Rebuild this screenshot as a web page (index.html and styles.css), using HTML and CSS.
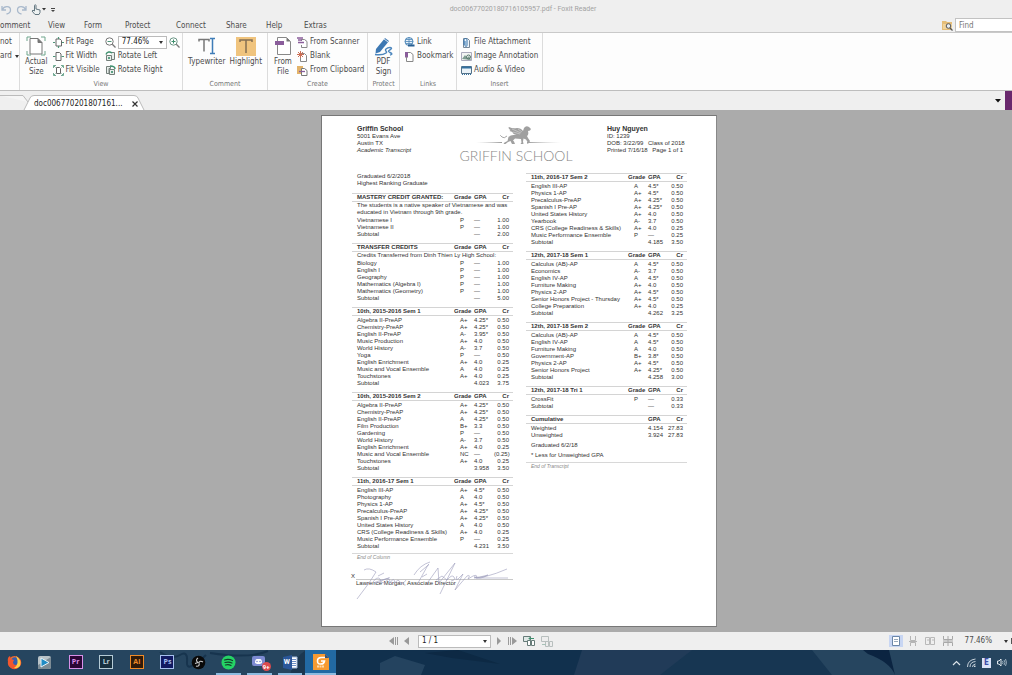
FILE: index.html
```html
<!DOCTYPE html>
<html lang="en">
<head>
<meta charset="utf-8">
<title>doc00677020180716105957.pdf - Foxit Reader</title>
<link rel="stylesheet" href="styles.css">
<script src="transcript.js" defer></script>
</head>
<body>
<div class="app">
  <header class="titlebar">
    <div class="quick">
      <button aria-label="Undo"><svg width="11" height="11" viewBox="0 0 11 11"><path d="M1 2v4h4M1.500 5.500C3 1.500 9.500 1.500 9.500 6c0 2-1.500 3.500-4 4" fill="none" stroke="#a9b9cc" stroke-width="1.300"/></svg></button>
      <button aria-label="Redo"><svg width="11" height="11" viewBox="0 0 11 11"><path d="M10 2v4H6M9.500 5.500C8 1.500 1.500 1.500 1.500 6c0 2 1.500 3.500 4 4" fill="none" stroke="#a9b9cc" stroke-width="1.300"/></svg></button>
      <button aria-label="Hand tool"><svg width="15" height="11" viewBox="0 0 15 11"><path d="M3.500 7V1.500c0-1 1.500-1 1.500 0V5l4 1v2.500L8 10.500H4L1 7l1-.8z" fill="#eef2f2" stroke="#647780" stroke-width="1"/><path d="M11 4h4l-2 2.500z" fill="#333"/></svg></button>
      <button aria-label="Customize"><svg width="6" height="11" viewBox="0 0 6 11"><path d="M1 4h4v1H1zM1 6h4L3 8z" fill="#444"/></svg></button>
    </div>
    <h1>doc00677020180716105957.pdf - Foxit Reader</h1>
  </header>

  <div class="menubar">
    <nav class="menu">
      <button aria-label="Comment">omment</button><button>View</button><button>Form</button><button>Protect</button><button>Connect</button><button>Share</button><button>Help</button><button>Extras</button>
    </nav>
    <label class="find">
      <svg width="11" height="11" viewBox="0 0 11 11"><path d="M0 1h4l1 1h5v8H0z" fill="#e5bd77"/><path d="M1 4h9v5H1z" fill="#f0d39b"/><circle cx="6.500" cy="6" r="2.300" fill="#e9eef2" stroke="#555" /><path d="M8 8l2.500 2.500" stroke="#555" stroke-width="1.300"/></svg>
      <input type="text" placeholder="Find" aria-label="Find">
    </label>
  </div>

  <div class="ribbon">
    <section class="group cut">
      <div class="stack"><button aria-label="SnapShot">not</button><button aria-label="Clipboard">ard <i class="caret"></i></button></div>
    </section>
    <section class="group view">
      <div class="tools">
        <button class="big"><svg width="20" height="20" viewBox="0 0 20 20"><path d="M4 2.500h8l4 4V18H4z" fill="#fff" stroke="#777"/><path d="M12 2.500v4h4" fill="#777" stroke="#777"/><path d="M1 5V1h4M15 1h4v4M1 15v4h4M19 15v4h-4" fill="none" stroke="#6fa58c"/></svg><span>Actual<br>Size</span></button>
        <div class="stack">
          <button><svg width="11" height="11" viewBox="0 0 11 11"><path d="M3 2h4l1.500 1.500V9H3z" fill="#fff" stroke="#666"/><path d="M0 5.500h2M9 5.500h2M5.500 0v2M5.500 9v2" stroke="#4f9478" stroke-width="1.200"/></svg>Fit Page</button>
          <button><svg width="11" height="11" viewBox="0 0 11 11"><path d="M3 1.500h3.500l1.500 1.500v6.500H3z" fill="#fff" stroke="#666"/><path d="M0 5.500h2.500M8.500 5.500H11" stroke="#4f9478" stroke-width="1.200"/></svg>Fit Width</button>
          <button><svg width="11" height="11" viewBox="0 0 11 11"><path d="M3.500 2.500h3l1 1v5h-4z" fill="#fff" stroke="#666"/><path d="M1 1l1.500 1.500M10 1L8.500 2.500M1 10l1.500-1.500M10 10L8.500 8.500M.5 3V.5H3M8 .5h2.500V3M.5 8v2.500H3M8 10.500h2.500V8" fill="none" stroke="#4f9478" stroke-width=".8"/></svg>Fit Visible</button>
        </div>
        <div class="stack">
          <div class="zoomrow">
            <button aria-label="Zoom out"><svg width="11" height="11" viewBox="0 0 11 11"><circle cx="4.500" cy="4.500" r="3.700" fill="#fff" stroke="#777"/><path d="M7.300 7.300L10.500 10.500" stroke="#777" stroke-width="1.300"/><path d="M2.500 4.500h4" stroke="#4f9478"/></svg></button>
            <span class="combo zoom"><select aria-label="Zoom level"><option>77.46%</option></select><i class="caret"></i></span>
            <button aria-label="Zoom in"><svg width="11" height="11" viewBox="0 0 11 11"><circle cx="4.500" cy="4.500" r="3.700" fill="#fff" stroke="#6a9585"/><path d="M7.300 7.300L10.500 10.500" stroke="#777" stroke-width="1.300"/><path d="M2.500 4.500h4M4.500 2.500v4" stroke="#3e8f6d"/></svg></button>
          </div>
          <button><svg width="11" height="11" viewBox="0 0 11 11"><path d="M1.500 4.500h5v5h-5zM5.500 1.500h4v7h-3" fill="#e8eeeb" stroke="#747f7a"/><path d="M1 3.500C2 .5 5 .5 7 2" fill="none" stroke="#3e8f6d" stroke-width="1.400"/><path d="M3 6h2v2H3z" fill="#5aa084"/></svg>Rotate Left</button>
          <button><svg width="11" height="11" viewBox="0 0 11 11"><path d="M4.500 4.500h5v5h-5zM1.500 1.500h4v2H4v5H1.500z" fill="#e8eeeb" stroke="#747f7a"/><path d="M5 1c3 0 5 1 5 3" fill="none" stroke="#3e8f6d" stroke-width="1.400"/><path d="M6 6h2v2H6z" fill="#5aa084"/></svg>Rotate Right</button>
        </div>
      </div>
      <h2>View</h2>
    </section>
    <section class="group comment">
      <div class="tools">
        <button class="big"><svg width="20" height="20" viewBox="0 0 20 20"><path d="M2 5.500V3.500h10v2M7 3.500v12" fill="none" stroke="#777" stroke-width="1.500"/><path d="M13 2.500h5M13 17.500h5M15.500 2.500v15" stroke="#3f7db8" stroke-width="1.500"/></svg><span>Typewriter</span></button>
        <button class="big"><svg width="20" height="20" viewBox="0 0 20 20"><path d="M0 1h20v19H0z" fill="#f0c47e"/><path d="M4 6V4h12v2M10 4v13" fill="none" stroke="#846f53" stroke-width="1.500"/></svg><span>Highlight</span></button>
      </div>
      <h2>Comment</h2>
    </section>
    <section class="group create">
      <div class="tools">
        <button class="big"><svg width="20" height="20" viewBox="0 0 20 20"><path d="M4.500 5V1.500h9l4 4v13h-13V9" fill="#fff" stroke="#888"/><path d="M13.500 1.500v4h4z" fill="#777"/><path d="M2 5h9v4H2z" fill="#8a5d9b"/></svg><span>From<br>File</span></button>
        <div class="stack">
          <button><svg width="11" height="11" viewBox="0 0 11 11"><path d="M4.500 4V2.500h3l2.500 2v6H4.500V8" fill="#fff" stroke="#888"/><path d="M0 1h6M1 3h4M1 5.500h6" stroke="#8a5d9b" stroke-width="1.300"/></svg>From Scanner</button>
          <button><svg width="11" height="11" viewBox="0 0 11 11"><path d="M3.500 2.500h4l2 2v6h-6z" fill="#fff" stroke="#888"/><path d="M3.500 0v7M0 3.500h7M1 1l5 5M6 1L1 6" stroke="#cb6e55"/></svg>Blank</button>
          <button><svg width="11" height="11" viewBox="0 0 11 11"><path d="M0 1h6v8H0z" fill="#e2b36a"/><path d="M4.500 3.500h3l2.500 2v5H4.500z" fill="#fff" stroke="#777"/><path d="M2 6.500h6" stroke="#8a5d9b" stroke-width="1.300"/></svg>From Clipboard</button>
        </div>
      </div>
      <h2>Create</h2>
    </section>
    <section class="group protect">
      <div class="tools">
        <button class="big"><svg width="20" height="20" viewBox="0 0 20 20"><path d="M2 13L11 2l4 3-9 11-4.500 1.500z" fill="#3d78b3"/><path d="M10 3l4 3M12 1l4 3" stroke="#fff" stroke-width=".8"/><path d="M1 18.500c4 .5 9 0 11-1.500s-2-2 0-4 7-2 5 0-4 2-1 3.500 2 2 0 2.500" fill="none" stroke="#4c86bd" stroke-width="1.400"/></svg><span>PDF<br>Sign</span></button>
      </div>
      <h2>Protect</h2>
    </section>
    <section class="group links">
      <div class="tools"><div class="stack">
        <button><svg width="11" height="11" viewBox="0 0 11 11"><circle cx="5" cy="4.500" r="4" fill="#e8f1f8" stroke="#4d87b8"/><path d="M1 4.500h8M5 .5v8M2 2.500h6M2 6.500h6" stroke="#4d87b8" stroke-width=".8"/><path d="M4 8.500h3M7 8.500h3.500" stroke="#275e92" stroke-width="2"/></svg>Link</button>
        <button><svg width="11" height="11" viewBox="0 0 11 11"><path d="M2.500 1.500h4l2.500 2v7H2.500z" fill="#fff" stroke="#888"/><path d="M1 1h3v6L2.500 5.500 1 7z" fill="#8a5d9b"/></svg>Bookmark</button>
      </div></div>
      <h2>Links</h2>
    </section>
    <section class="group insert">
      <div class="tools"><div class="stack">
        <button><svg width="11" height="11" viewBox="0 0 11 11"><path d="M2.500 1.500h4l2 2v7h-6z" fill="#eef4f9" stroke="#789"/><path d="M3 8V3c0-2 3-2 3 0v5c0 2-2 2-2 0V4" fill="none" stroke="#3575ae"/></svg>File Attachment</button>
        <button><svg width="11" height="11" viewBox="0 0 11 11"><path d="M.5 1.500h10v8H.5z" fill="#f2f4f2" stroke="#aab"/><path d="M1 8l3-4 2 3 2-2 2 4z" fill="#7e9c90"/><circle cx="7.500" cy="6" r="2" fill="none" stroke="#55776a"/></svg>Image Annotation</button>
        <button><svg width="11" height="11" viewBox="0 0 11 11"><path d="M.5 1.500h10v7H.5z" fill="#eaf2f8" stroke="#54738b"/><path d="M1 2.500h9" stroke="#35719f" stroke-width="2"/><path d="M1 9.500h9" stroke="#35719f" stroke-dasharray="1 1"/></svg>Audio &amp; Video</button>
      </div></div>
      <h2>Insert</h2>
    </section>
  </div>

  <div class="tabs">
    <svg class="tabshape" width="146" height="19" viewBox="0 0 146 19"><path d="M0 4.500h23L28 11" fill="#f5f5f5" stroke="#bbb"/><path d="M24 19l6-12q1-2.500 4-2.500h100q3 0 4 2.500l6 12" fill="#fff" stroke="#bbb"/></svg>
    <button class="tab">doc006770201807161...</button>
    <button class="close" aria-label="Close tab"><svg width="6" height="6" viewBox="0 0 6 6"><path d="M.5.5l5 5M5.500.5l-5 5" stroke="#333" stroke-width="1.200"/></svg></button>
    <button class="tablist" aria-label="List tabs"><svg width="6" height="4" viewBox="0 0 6 4"><path d="M0 0h6L3 3.500z" fill="#111"/></svg></button>
    <span class="accent"></span>
  </div>

  <main class="work">
    <article class="sheet">
      <header class="letterhead">
        <address><strong>Griffin School</strong><span>5001 Evans Ave</span><span>Austin TX</span><em>Academic Transcript</em></address>
        <div class="logo">
          <svg width="100" height="20" viewBox="0 0 100 20">
            <defs><linearGradient id="l"><stop offset="0" stop-color="#ccc" stop-opacity="0"/><stop offset="1" stop-color="#999"/></linearGradient><linearGradient id="r"><stop offset="0" stop-color="#999"/><stop offset="1" stop-color="#ccc" stop-opacity="0"/></linearGradient></defs>
            <path d="M10 17h26v1H10z" fill="url(#l)"/><path d="M61 17h34v1H61z" fill="url(#r)"/>
            <path d="M43 2q4 2 8 1 4 0 6 3l1-3q2-3 5-1l2 2-1 1.500-2 .5q1 4-1 5l1 2 2 3-1 2-2 1 .5-2-1.500-2.500-2.500-1-.5 3 .5 2.500h-3l1-1.500-.5-3.500-6-.5-2 2 1 1 1 2.500h-3l-1.500-3-2.500 1-2.500 2h-2l1-1.500 3-1.500 1-4q2-2 5-2l3 0q-4-1-4-3l-3-1 1-1q-2-1-2-2.500z" fill="#a0a0a0"/>
            <path d="M46 4l9 4M47 7l7 2M52 4l4 3" stroke="#d6d6d6" stroke-width=".6" fill="none"/><path d="M41 11q-3 3-5 1t-2-2" stroke="#a8a8a8" fill="none"/>
          </svg>
          <span>GRIFFIN SCHOOL</span>
        </div>
        <address><strong>Huy Nguyen</strong><span>ID: 1239</span><span>DOB: 3/22/99&ensp; Class of 2018</span><span>Printed 7/16/18&ensp; Page 1 of 1</span></address>
      </header>
      <div class="columns">
        <div class="column">
          <p class="inset">Graduated 6/2/2018<br>Highest Ranking Graduate</p>
          <div class="terms" id="left"></div>
          <p class="ending">End of Column</p>
          <div class="signature">
            <span class="mark">X</span><span class="line"></span>
            <p>Lawrence Morgan, Associate Director</p>
            <svg class="ink" width="160" height="42" viewBox="0 0 160 42"><path d="M12 12q5-3 12 2L17 25 5 41M26 18l6-3M21 24q4-6 7-3t-4 4 6-3 4-1-1 4q5-8 5 0 4-7 5 0 3-5 5-1t6-2M62 17q6-10 16-13M68 14Q80 4 76 7L66 25M70 19l5-3M76 24L86 10l1 15L103 5 88 36M84 22l6-4 5 4M95 22q5-6 7-3t-3 4M105 18q-2 5 1 3l5-5-8 16 12-14q4-2 1 3l5-3q5-2 3 2l12-3q-8 5-14 2 10 2 33-8M122 20h34" fill="none" stroke="#9a9abb" stroke-width=".6"/></svg>
          </div>
        </div>
        <div class="column">
          <div class="terms" id="right"></div>
          <p class="note">Graduated 6/2/18</p>
          <p class="note">* Less for Unweighted GPA</p>
          <p class="ending">End of Transcript</p>
        </div>
      </div>
    </article>
  </main>

  <footer class="status">
    <div class="pager">
      <button aria-label="First page"><svg width="9" height="8" viewBox="0 0 9 8"><path d="M5 0v8L0 4zM6 0h1v8H6zM8 0h1v8H8z" fill="#9a9a9a"/></svg></button>
      <button aria-label="Previous page"><svg width="6" height="8" viewBox="0 0 6 8"><path d="M5 0v8L0 4z" fill="#999"/></svg></button>
      <span class="combo page"><select aria-label="Page"><option>1 / 1</option></select><i class="caret"></i></span>
      <button aria-label="Next page"><svg width="6" height="8" viewBox="0 0 6 8"><path d="M1 0v8l4-4z" fill="#999"/></svg></button>
      <button aria-label="Last page"><svg width="9" height="8" viewBox="0 0 9 8"><path d="M4 0v8l5-4zM0 0h1v8H0zM2 0h1v8H2z" fill="#9a9a9a"/></svg></button>
      <button aria-label="Previous view"><svg width="12" height="11" viewBox="0 0 12 11"><path d="M.5.500h7v5h-7z" fill="#dfe8e6" stroke="#667b78"/><path d="M4.500 4.500h3v5h-3zM8.500 4.500h3v5h-3z" fill="#fff" stroke="#667b78"/><path d="M11 2.500H6M7.500 1L6 2.500 7.500 4" fill="none" stroke="#3e8f6d"/></svg></button>
      <button aria-label="Next view"><svg width="12" height="11" viewBox="0 0 12 11"><path d="M.5.500h7v5h-7zM4.500 5.500h3v5h-3zM8.500 5.500h3v5h-3z" fill="#eee" stroke="#b8bfbe"/><path d="M1 8.500h4" stroke="#a9c2b8"/></svg></button>
    </div>
    <div class="layouts">
      <button class="on" aria-label="Single page"><svg width="8" height="10" viewBox="0 0 8 10"><path d="M.5.500h7v9h-7z" fill="#fff" stroke="#6b87a8"/><path d="M2 3.500h4M2 5.500h4" stroke="#9ab"/></svg></button>
      <button aria-label="Continuous"><svg width="8" height="10" viewBox="0 0 8 10"><path d="M1.500 0v4.500h5V0M1.500 10V6.500h5V10M0 5.500h8" fill="none" stroke="#b5b5b5"/></svg></button>
      <button aria-label="Facing"><svg width="10" height="10" viewBox="0 0 10 10"><path d="M.5 1.500h4v7h-4zM5.500 1.500h4v7h-4zM2 4h2M7 4h2" fill="none" stroke="#b9b9b9"/></svg></button>
      <button aria-label="Continuous facing"><svg width="10" height="10" viewBox="0 0 10 10"><path d="M.5 0v3.500H9.500V0M.5 10V6.500h9V10M5 0v10M0 5h10" fill="none" stroke="#a8a8a8"/></svg></button>
    </div>
    <button class="percent">77.46%</button><i class="caret"></i><i class="slider"></i>
  </footer>

  <footer class="taskbar">
    <svg class="wallpaper" width="1012" height="25" viewBox="0 0 1012 25" preserveAspectRatio="none">
      <path d="M0 0h1012v25H0z" fill="#26455f"/><path d="M336 0h276l-10 25H336z" fill="#11304d"/><path d="M160 2q12 8 20 3t7 7 19-7M210 3q40 6 58-2" fill="none" stroke="#17344e" stroke-width="2"/><path d="M290 25q4-18 16-25h30v25z" fill="#1b3750"/>
      <path d="M380 13l15-7 30 9-4 10h-41z" fill="#24435f"/><path d="M425 3l33-3 42 14-48-6z" fill="#0d2944"/><path d="M582 0h110l-25 25h-93z" fill="#213b58"/><path d="M692 0h120l20 25H660z" fill="#173652"/><path d="M863 0h26l6 25q-5-13-27-21z" fill="#0b2441"/>
    </svg>
    <nav class="apps">
      <a href="#" aria-label="Firefox"><svg width="15" height="15" viewBox="0 0 15 15"><circle cx="7.500" cy="7.500" r="6.500" fill="#ef6b2e"/><circle cx="8" cy="6.500" r="4.200" fill="#365fae"/><path d="M1 7C0 2 3 1 3 1l1 3 3 1-1 2q0 3 3 3 4-1 4-6 3 5-1 8-4 4-8 1T1 7z" fill="#f2572e"/><path d="M9 1q6 4 4 10-3 3-6 2 6-4 2-12z" fill="#ffd14a"/></svg></a>
      <a href="#" aria-label="Media player"><svg width="15" height="15" viewBox="0 0 15 15"><rect x="1" y="1" width="13" height="13" rx="2" fill="#b9c3c8"/><path d="M1 10l13-8v10q0 2-2 2H1z" fill="#7d8c95"/><path d="M4 3l8 4.500L4 12z" fill="#218cc4" stroke="#e7f4fa"/></svg></a>
      <a href="#" class="adobe pr"><span>Pr</span></a>
      <a href="#" class="adobe lr"><span>Lr</span></a>
      <a href="#" class="adobe ai"><span>Ai</span></a>
      <a href="#" class="adobe ps"><span>Ps</span></a>
      <a href="#" aria-label="OBS"><svg width="15" height="15" viewBox="0 0 15 15"><circle cx="7.500" cy="7.500" r="6.800" fill="#090909"/><path d="M7 3q-3 2 0 4.500M12 7q-3-2-4.500 1M5 11q4 1 3-3.500M7 7.500l-3 1" fill="none" stroke="#ccc" stroke-width="1.100"/></svg></a>
      <a href="#" class="open" aria-label="Spotify"><svg width="15" height="15" viewBox="0 0 15 15"><circle cx="7.500" cy="7.500" r="7" fill="#25d365"/><path d="M3.500 5q4-1.500 8 .5M4 7.500q4-1 7 .5M4.500 10q3-1 5.500.5" fill="none" stroke="#123f2a" stroke-width="1.200" stroke-linecap="round"/></svg></a>
      <a href="#" class="open discord" aria-label="Discord"><svg width="15" height="15" viewBox="0 0 15 15"><path d="M2 1h9q2 0 2 2v10l-3-2H2q-2 0-2-2V3q0-2 2-2z" fill="#7d8bd2"/><path d="M3 8q0-4 2-4h3q2 0 2 4l-2 1H5z" fill="#fff"/><circle cx="5" cy="6.500" r=".8" fill="#7d8bd2"/><circle cx="8" cy="6.500" r=".8" fill="#7d8bd2"/></svg><b>9+</b></a>
      <a href="#" class="open word" aria-label="Word"><svg width="15" height="15" viewBox="0 0 15 15"><path d="M7 2h7v11H7z" fill="#fff" stroke="#9db5d9"/><path d="M8 4.500h5M8 6.500h5M8 8.500h5M8 10.500h5" stroke="#6d8fc5"/><path d="M0 2l9-2v15l-9-2z" fill="#2b579a"/></svg><b>W</b></a>
      <a href="#" class="open active" aria-label="Foxit Reader"><svg width="16" height="16" viewBox="0 0 16 16"><path d="M0 0h12l4 4v12H0z" fill="#f79a31"/><path d="M12 0l4 4h-4z" fill="#38557a"/><path d="M12 3.500H8.500q-4 0-4 3.500t3.500 3q3 0 3.500-3H8" fill="none" stroke="#fff" stroke-width="1.600"/><path d="M4 12.500h7" stroke="#ffd9a8" stroke-width="2" stroke-dasharray="2 .5"/></svg></a>
    </nav>
    <div class="tray">
      <svg width="9" height="6" viewBox="0 0 9 6"><path d="M1 5l3.500-3.500L8 5" fill="none" stroke="#dce4ea" stroke-width="1.200"/></svg>
      <svg width="9" height="9" viewBox="0 0 9 9"><path d="M.5 9q0-7 8-8M3 9q0-5 5.500-5.500M5.500 9q0-2.500 3-3" fill="none" stroke="#c5d0d9"/><circle cx="7.800" cy="8.200" r=".8" fill="#fff"/></svg>
      <span class="lang">E</span>
      <svg width="10" height="9" viewBox="0 0 10 9"><path d="M.5 3h1.500l2-2v7L2 6H.5z" fill="none" stroke="#dde5ea"/><path d="M5.500 3q1 1.500 0 3M7 2q2 2.500 0 5M8.500 1q2 3.500 0 7" fill="none" stroke="#b9c8d3" stroke-width=".8"/></svg>
    </div>
  </footer>
</div>
</body>
</html>
```

FILE: transcript.js
```js
const left = [
  { title: "MASTERY CREDIT GRANTED:", note: "The students is a native speaker of Vietnamese and was<br>educated in Vietnam through 9th grade.",
    rows: ["Vietnamese I|P|—|1.00", "Vietnamese II|P|—|1.00", "Subtotal||—|2.00"] },
  { title: "TRANSFER CREDITS", note: "Credits Transferred from Dinh Thien Ly High School:",
    rows: ["Biology|P|—|1.00", "English I|P|—|1.00", "Geography|P|—|1.00", "Mathematics (Algebra I)|P|—|1.00", "Mathematics (Geometry)|P|—|1.00", "Subtotal||—|5.00"] },
  { title: "10th, 2015-2016 Sem 1",
    rows: ["Algebra II-PreAP|A+|4.25*|0.50", "Chemistry-PreAP|A+|4.25*|0.50", "English II-PreAP|A-|3.95*|0.50", "Music Production|A+|4.0|0.50", "World History|A-|3.7|0.50", "Yoga|P|—|0.50", "English Enrichment|A+|4.0|0.25", "Music and Vocal Ensemble|A|4.0|0.25", "Touchstones|A+|4.0|0.25", "Subtotal||4.023|3.75"] },
  { title: "10th, 2015-2016 Sem 2",
    rows: ["Algebra II-PreAP|A+|4.25*|0.50", "Chemistry-PreAP|A+|4.25*|0.50", "English II-PreAP|A|4.25*|0.50", "Film Production|B+|3.3|0.50", "Gardening|P|—|0.50", "World History|A-|3.7|0.50", "English Enrichment|A+|4.0|0.25", "Music and Vocal Ensemble|NC|—|(0.25)", "Touchstones|A+|4.0|0.25", "Subtotal||3.958|3.50"] },
  { title: "11th, 2016-17 Sem 1",
    rows: ["English III-AP|A+|4.5*|0.50", "Photography|A|4.0|0.50", "Physics 1-AP|A+|4.5*|0.50", "Precalculus-PreAP|A+|4.25*|0.50", "Spanish I Pre-AP|A+|4.25*|0.50", "United States History|A|4.0|0.50", "CRS (College Readiness & Skills)|A+|4.0|0.25", "Music Performance Ensemble|P|—|0.25", "Subtotal||4.231|3.50"] }
];
const right = [
  { title: "11th, 2016-17 Sem 2",
    rows: ["English III-AP|A|4.5*|0.50", "Physics 1-AP|A+|4.5*|0.50", "Precalculus-PreAP|A+|4.25*|0.50", "Spanish I Pre-AP|A+|4.25*|0.50", "United States History|A+|4.0|0.50", "Yearbook|A-|3.7|0.50", "CRS (College Readiness & Skills)|A+|4.0|0.25", "Music Performance Ensemble|P|—|0.25", "Subtotal||4.185|3.50"] },
  { title: "12th, 2017-18 Sem 1",
    rows: ["Calculus (AB)-AP|A|4.5*|0.50", "Economics|A-|3.7|0.50", "English IV-AP|A|4.5*|0.50", "Furniture Making|A+|4.0|0.50", "Physics 2-AP|A+|4.5*|0.50", "Senior Honors Project - Thursday|A+|4.5*|0.50", "College Preparation|A+|4.0|0.25", "Subtotal||4.262|3.25"] },
  { title: "12th, 2017-18 Sem 2",
    rows: ["Calculus (AB)-AP|A|4.5*|0.50", "English IV-AP|A|4.5*|0.50", "Furniture Making|A|4.0|0.50", "Government-AP|B+|3.8*|0.50", "Physics 2-AP|A+|4.5*|0.50", "Senior Honors Project|A+|4.25*|0.50", "Subtotal||4.258|3.00"] },
  { title: "12th, 2017-18 Tri 1", rows: ["CrossFit|P|—|0.33", "Subtotal||—|0.33"] },
  { title: "Cumulative", noGrade: true, rows: ["Weighted||4.154|27.83", "Unweighted||3.924|27.83"] }
];
const table = term => `<table>
  <thead><tr><th>${term.title}</th><th>${term.noGrade ? "" : "Grade"}</th><th>GPA</th><th>Cr</th></tr></thead>
  <tbody>${term.note ? `<tr class="about"><td colspan="4">${term.note}</td></tr>` : ""}
  <tr class="space"><td colspan="4"></td></tr>
  ${term.rows.map(row => `<tr>${row.replace("&", "&amp;").split("|").map(cell => `<td>${cell}</td>`).join("")}</tr>`).join("")}</tbody>
</table>`;
document.getElementById("left").innerHTML = left.map(table).join("");
document.getElementById("right").innerHTML = right.map(table).join("");
```

FILE: styles.css
```css
* { box-sizing: border-box; }
body { margin: 0; font: 8px/10px "DejaVu Sans Condensed", "DejaVu Sans", Roboto, sans-serif; color: #4c4c4c; }
button, input, select { font: inherit; color: inherit; margin: 0; padding: 0; border: 0; background: none; border-radius: 0; }
button { display: flex; align-items: center; white-space: nowrap; }
h1, h2, p { margin: 0; font-weight: 400; }
svg { display: block; flex: none; }
.app { display: flex; flex-direction: column; min-height: 100vh; background: #efefef; overflow: hidden; }
.caret { width: 0; border: 2px solid transparent; border-top: 3px solid #333; border-bottom: 0; flex: none; }

.titlebar { display: grid; grid-template-columns: 1fr auto 1fr; align-items: center; height: 18px; padding-left: 34px; }
.titlebar h1 { font: 7px/10px Roboto, sans-serif; color: #a3a3a3; }
.quick { display: flex; gap: 4px; margin-left: -33px; }

.menubar { display: flex; justify-content: space-between; align-items: center; height: 14px; }
.menu { display: grid; grid-template-columns: 48px 36px 41px 51px 50px 40px 38px auto; padding-top: 1px; }
.find { display: flex; align-items: center; gap: 2px; }
.find input { width: 57px; height: 14px; padding-left: 3px; background: #fff; border: 1px solid #c2c2c2; border-right: 0; }
.find input::placeholder { color: #777; opacity: 1; }

.ribbon { display: flex; height: 59px; background: #fdfdfd; border-top: 1px solid #c9c9c9; border-bottom: 1px solid #bdbdbd; }
.group { display: flex; flex-direction: column; justify-content: space-between; padding: 2px 0 1px; border-right: 1px solid #dcdcdc; flex: none; }
.group h2 { text-align: center; font-size: 7px; line-height: 9px; color: #777; }
.tools { display: flex; }
.stack { display: flex; flex-direction: column; }
.stack button { height: 14px; gap: 2px; }
.big { flex-direction: column; justify-content: flex-start; padding-top: 1px; }
.big svg { margin-bottom: 1px; }
.cut { width: 20px; }
.cut .stack button { gap: 3px; }
.view { width: 163px; }
.view .tools { padding-left: 5px; gap: 5px; }
.zoomrow { display: flex; align-items: center; height: 14px; gap: 2px; }
.combo { position: relative; display: flex; border: 1px solid #bbb; background: #fff; }
.combo select { appearance: none; width: 100%; padding-left: 3px; color: #222; }
.combo .caret { position: absolute; right: 3px; top: 4px; }
.zoom { width: 49px; height: 13px; }
.comment { width: 85px; }
.comment .tools { padding-left: 5px; gap: 4px; }
.create { width: 100px; }
.create .tools { padding-left: 5px; gap: 4px; }
.protect { width: 32px; }
.protect .tools { justify-content: center; }
.links { width: 57px; }
.links .tools, .insert .tools { padding-left: 4px; }
.insert { width: 86px; }

.tabs { position: relative; display: flex; align-items: center; height: 19px; }
.tabshape { position: absolute; left: 0; top: 0; }
.tab { position: relative; padding: 7px 0 0 34px; color: #222; }
.close { position: relative; margin-left: 10px; padding-top: 7px; }
.tablist { margin-left: auto; margin-right: 4px; }
.accent { width: 7px; height: 19px; background: #69286d; }

.work { flex: 1; display: flex; justify-content: center; align-items: flex-start; padding: 5px 0 5px 26px; background: #ababab; }
.sheet { width: 396px; min-height: 512px; padding: 9px 29px 0 30px; background: #fff; border: 1px solid #777; border-right-color: #888; font: 6px/7px "Liberation Sans", Arial, sans-serif; color: #333; white-space: nowrap; }
.letterhead { display: grid; grid-template-columns: 104px 146px 1fr; padding-left: 5px; height: 48px; }
.letterhead address { font-style: normal; display: flex; flex-direction: column; }
.letterhead strong { font-size: 7px; line-height: 8px; }
.logo { width: 110px; display: flex; flex-direction: column; align-items: center; }
.logo span { font: 300 14px/22px Lato, sans-serif; color: #888; }
.columns { display: grid; grid-template-columns: 1fr 1fr; gap: 13px; }
.inset { padding: 0 5px; margin-bottom: 6px; }
.terms { display: flex; flex-direction: column; gap: 5px; }
.terms table { width: 100%; table-layout: fixed; border-spacing: 0; }
.terms th, .terms td { padding: 0; text-align: left; }
.terms th { border: solid #d4d4d4; border-width: 1px 0; }
.terms th:first-child, .terms td:first-child { width: 102px; padding-left: 5px; }
.terms th:nth-child(2), .terms th:nth-child(3) { width: 20px; }
.terms td:nth-child(2) { padding-left: 6px; }
.terms th:last-child, .terms td:nth-child(4) { text-align: right; padding-right: 4px; }
.terms .space td { height: 1px; line-height: 1px; }
.ending { margin-top: 3px; padding: 0 5px; border-top: 1px solid #d8d8d8; font-size: 5px; font-style: italic; color: #888; }
.note { padding: 3px 5px 0; }
.signature { position: relative; display: flex; flex-wrap: wrap; align-items: flex-end; margin-top: 11px; }
.signature .mark { width: 5px; margin-left: -1px; }
.signature .line { flex: 1; height: 8px; border-bottom: 1px solid #c9c9c9; }
.signature p { width: 100%; padding-left: 4px; }
.ink { position: absolute; left: 0; top: -14px; }

.status { display: flex; align-items: center; height: 18px; gap: 12px; }
.pager { display: flex; align-items: center; gap: 6px; margin-left: 389px; margin-right: auto; }
.page { width: 73px; height: 13px; margin: 0 -1px 0 2px; }
.layouts { display: flex; align-items: center; gap: 8px; }
.layouts .on { background: #c8d6f3; padding: 1px 3px; margin-right: -2px; }
.slider { width: 1px; height: 6px; background: #555; margin-left: -9px; }

.taskbar { position: relative; display: flex; justify-content: space-between; height: 25px; }
.wallpaper { position: absolute; inset: 0; width: 100%; }
.apps { position: relative; display: grid; grid-template-columns: repeat(11, 1fr); width: 337px; margin-left: -1px; }
.apps a { display: flex; align-items: center; justify-content: center; position: relative; text-decoration: none; border-bottom: 2px solid transparent; padding-top: 1px; margin: 0 3px; }
.apps .open { border-bottom-color: #8dbbe0; }
.apps .active { background: #2269a3; margin: 0; }
.adobe span { width: 14px; height: 14px; border: 1px solid; font: bold 7px/12px "Open Sans", sans-serif; text-align: center; }
.pr span { color: #d890e8; background: #2c0636; }
.lr span { color: #b5cbd6; background: #17303f; }
.ai span { color: #ef8a26; background: #301b09; }
.ps span { color: #a6bfee; background: #111a62; }
.apps b { position: absolute; color: #fff; font: bold 7px/9px Roboto, sans-serif; }
.discord b { right: 1px; bottom: 2px; width: 9px; background: #dc4b4f; border-radius: 5px; font-size: 6px; text-align: center; }
.word b { left: 6px; top: 8px; }
.tray { position: relative; display: flex; align-items: center; gap: 6px; padding-right: 5px; }
.lang { width: 9px; height: 10px; background: #dbe3f8; color: #3d4fa8; font-weight: bold; text-align: center; }
```
